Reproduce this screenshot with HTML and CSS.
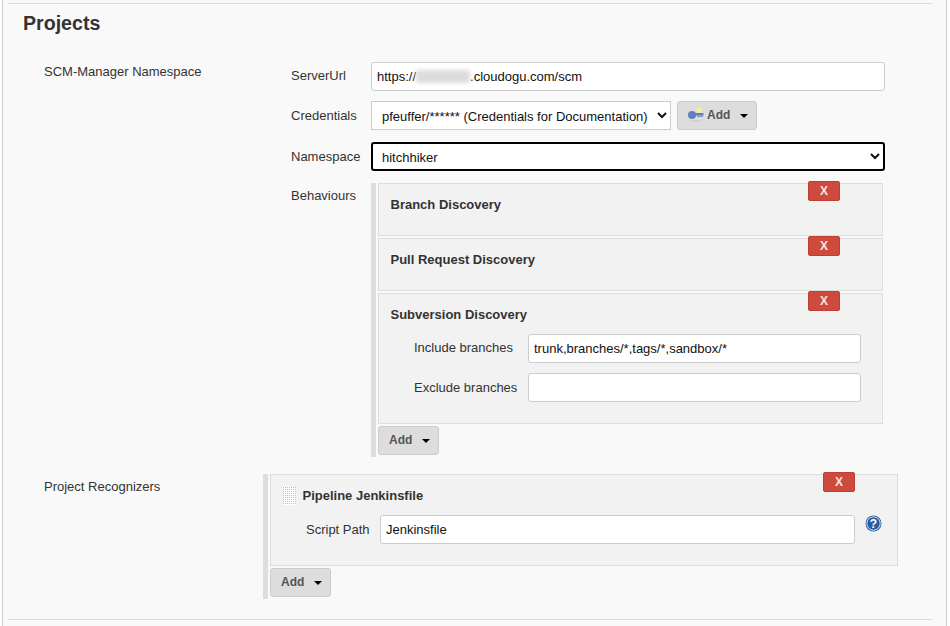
FILE: index.html
```html
<!DOCTYPE html>
<html lang="en">
<head>
    <meta charset="UTF-8">
    <title>Projects</title>
    <link rel="stylesheet" href="styles.css">
</head>
<body>
<div class="frame">
    <div class="panel">
        <h2>Projects</h2>

        <div class="source">
            <div class="source-label">SCM-Manager Namespace</div>
            <div class="fields">
                <div class="row">
                    <label>ServerUrl</label>
                    <div class="url-input">https://<span class="blurred"></span>.cloudogu.com/scm</div>
                </div>
                <div class="row">
                    <label>Credentials</label>
                    <div class="cred-line">
                        <select class="select cred-select">
                            <option>pfeuffer/****** (Credentials for Documentation)</option>
                        </select>
                        <button class="add-btn key-btn">
                            <svg class="key" width="16" height="14" viewBox="0 0 16 14">
                                <ellipse cx="8" cy="13" rx="6" ry="1" fill="#d0d0d0"/>
                                <circle cx="11.5" cy="2.5" r="2.4" fill="#fff27a"/>
                                <circle cx="4" cy="7" r="4" fill="#5f82bb"/>
                                <rect x="6" y="5" width="9.5" height="2.6" fill="#5f82bb"/>
                                <rect x="9" y="7.6" width="6" height="1.4" fill="#7f9bc9"/>
                            </svg>
                            Add<span class="caret"></span>
                        </button>
                    </div>
                </div>
                <div class="row namespace-row">
                    <label>Namespace</label>
                    <select class="select namespace-select">
                        <option>hitchhiker</option>
                    </select>
                </div>
                <div class="row behaviours-row">
                    <label>Behaviours</label>
                    <div class="repeat behaviours">
                        <div class="block short">
                            <button class="del">X</button>
                            <div class="block-title">Branch Discovery</div>
                        </div>
                        <div class="block short">
                            <button class="del">X</button>
                            <div class="block-title">Pull Request Discovery</div>
                        </div>
                        <div class="block svn">
                            <button class="del">X</button>
                            <div class="block-title">Subversion Discovery</div>
                            <div class="branch-row">
                                <label>Include branches</label>
                                <input class="input" value="trunk,branches/*,tags/*,sandbox/*">
                            </div>
                            <div class="branch-row">
                                <label>Exclude branches</label>
                                <input class="input" value="">
                            </div>
                        </div>
                        <button class="add-btn">Add<span class="caret"></span></button>
                    </div>
                </div>
            </div>
        </div>

        <div class="recognizers">
            <div class="source-label">Project Recognizers</div>
            <div class="repeat pipeline-list">
                <div class="block pipeline">
                    <button class="del">X</button>
                    <div class="pipeline-title"><span class="handle"></span>Pipeline Jenkinsfile</div>
                    <div class="script-row">
                        <label>Script Path</label>
                        <input class="input" value="Jenkinsfile">
                        <svg class="help" width="17" height="17" viewBox="0 0 17 17">
                            <circle cx="8.5" cy="8.5" r="8" fill="#2f5c9e"/>
                            <circle cx="8.5" cy="8.5" r="6.7" fill="none" stroke="#d6e0ef" stroke-width="1"/>
                            <text x="8.5" y="12.6" text-anchor="middle" class="help-mark">?</text>
                        </svg>
                    </div>
                </div>
                <button class="add-btn">Add<span class="caret"></span></button>
            </div>
        </div>
    </div>
</div>
</body>
</html>
```

FILE: styles.css
```css
* {
    box-sizing: border-box;
}

html, body {
    margin: 0;
    padding: 0;
    height: 100%;
    overflow: hidden;
    background-color: #fff;
}

body {
    font-family: "Liberation Sans", Arial, sans-serif;
    font-size: 13px;
    color: #333;
}

.frame {
    margin: 0 3px 0 2px;
    height: 626px;
    padding: 3px 14px 0 5px;
    background-color: #f9f9f9;
    border-left: 1px solid #ccc;
    border-right: 1px solid #ccc;
}

.panel {
    height: 617px;
    border-top: 1px solid #ddd;
    border-bottom: 1px solid #ddd;
}

h2 {
    margin: 0;
    padding: 7px 0 0 15px;
    height: 58px;
    font-size: 19.6px;
    line-height: 24px;
    font-weight: bold;
    color: #333;
}

.source {
    display: grid;
    grid-template-columns: 283px 514px;
}

.source-label {
    padding: 2px 0 0 36px;
    line-height: 16px;
}

.fields {
    display: flex;
    flex-direction: column;
    gap: 10px;
}

.row {
    display: grid;
    grid-template-columns: 80px 514px;
}

.row > label {
    padding-top: 7px;
    line-height: 16px;
}

.row:first-child > label {
    padding-top: 6px;
}

.namespace-row,
.behaviours-row {
    margin-top: 2px;
}

.behaviours-row > label {
    padding-top: 5px;
}

.input,
.url-input {
    display: block;
    width: 100%;
    height: 29px;
    padding: 0 5px;
    font-family: inherit;
    font-size: 13px;
    line-height: 27px;
    color: #111;
    background-color: #fff;
    border: 1px solid #ccc;
    border-radius: 3px;
    outline: none;
}

.blurred {
    display: inline-block;
    width: 54px;
    height: 13px;
    vertical-align: -2px;
    background-color: #dcdcdc;
    filter: blur(2px);
}

.select {
    height: 29px;
    padding: 2px 0 0 6px;
    font-family: inherit;
    font-size: 13px;
    color: #111;
    background-color: #fff;
    border: 1px solid #ccc;
    border-radius: 0;
}

.cred-line {
    display: flex;
    gap: 6px;
}

.cred-select {
    width: 300px;
}

.namespace-select {
    width: 514px;
    padding-left: 5px;
    border: 2px solid #000;
    border-radius: 3px;
}

.add-btn {
    display: flex;
    align-items: center;
    width: 61px;
    height: 29px;
    padding: 0 0 2px 10px;
    font-family: inherit;
    font-size: 12px;
    font-weight: bold;
    color: #555;
    background-color: #ddd;
    border: 1px solid #ccc;
    border-radius: 3px;
}

.key-btn {
    width: 80px;
}

.key {
    margin-right: 3px;
}

.caret {
    width: 0;
    height: 0;
    margin: 3px 0 0 10px;
    border-left: 4px solid transparent;
    border-right: 4px solid transparent;
    border-top: 4px solid #000;
}

.repeat {
    position: relative;
    padding-left: 2px;
    border-left: 5px solid #ddd;
}

.behaviours {
    width: 512px;
    height: 274px;
}

.pipeline-list {
    padding-bottom: 2px;
}

.block {
    position: relative;
    background-color: #f2f2f2;
    border: 1px solid #ddd;
    margin-bottom: 2px;
}

.block.short {
    height: 53px;
}

.block.svn {
    height: 131px;
}

.block-title,
.pipeline-title {
    font-weight: bold;
    line-height: 16px;
}

.block-title {
    padding: 13px 0 0 11.5px;
}

.del {
    position: absolute;
    top: -3px;
    right: 42px;
    width: 32px;
    height: 20px;
    padding: 0;
    font-family: inherit;
    font-size: 12px;
    font-weight: bold;
    color: #f5e6e4;
    background-color: #cd4a3d;
    border: 1px solid #bd4034;
    border-radius: 2px;
}

.branch-row {
    display: grid;
    grid-template-columns: 114px 333px;
    padding-left: 35px;
    margin-bottom: 10px;
}

.block-title + .branch-row {
    margin-top: 11px;
}

.branch-row label {
    line-height: 28px;
}

.branch-row + .branch-row label {
    line-height: 30px;
}

.recognizers {
    display: grid;
    grid-template-columns: 255px 635px;
    margin-top: 17px;
}

.recognizers .source-label {
    padding-top: 5px;
}

.pipeline {
    height: 92px;
}

.pipeline-title {
    display: flex;
    align-items: center;
    padding: 12px 0 0 12px;
}

.handle {
    width: 13px;
    height: 18px;
    margin-right: 6.5px;
    background-color: #bbb;
    background-image: linear-gradient(90deg, transparent 1px, #fff 1px), linear-gradient(transparent 1px, #fff 1px);
    background-size: 2px 2px;
}

.script-row {
    display: grid;
    grid-template-columns: 74px 475px 17px;
    align-items: center;
    padding: 10px 0 0 35px;
}

.script-row .help {
    margin: -12px 0 0 10px;
    overflow: visible;
}

.help-mark {
    font-family: "Liberation Sans", Arial, sans-serif;
    font-size: 12px;
    font-weight: bold;
    fill: #fff;
}
```
